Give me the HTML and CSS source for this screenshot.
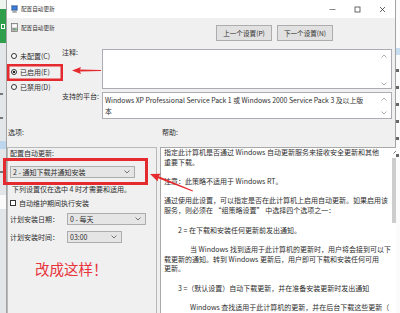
FILE: index.html
```html
<!DOCTYPE html>
<html lang="zh-CN">
<head>
<meta charset="utf-8">
<title>配置自动更新</title>
<link rel="stylesheet" href="styles.css">
</head>
<body>
<div class="screen">
  <div class="bg-left">
    <div class="bl-top"></div>
    <div class="bl-green"><span class="bl-icon"></span></div>
    <div class="bl-rest">
      <span class="bl-mark"></span>
      <span class="bl-mark"></span>
      <span class="bl-blue"></span>
      <span class="bl-mark"></span>
      <span class="bl-white"></span>
    </div>
  </div>

  <div class="dialog">
    <div class="titlebar">
      <svg class="ticon" width="7" height="8" viewBox="0 0 7 8"><rect x="0.5" y="0.5" width="6" height="5" fill="#1d4f9e" stroke="#8a9bb5" stroke-width="0.6"/><rect x="1.3" y="1.3" width="4.4" height="3.4" fill="#3f7fd6"/><rect x="2.5" y="5.5" width="2" height="1" fill="#9a9a9a"/><rect x="1.2" y="6.5" width="4.6" height="1" fill="#777"/></svg>
      <span class="ttext">配置自动更新</span>
      <div class="wctrls">
        <span class="wbtn"><svg width="7" height="7" viewBox="0 0 7 7"><line x1="0.5" y1="3.5" x2="6.5" y2="3.5" stroke="#555" stroke-width="0.7"/></svg></span>
        <span class="wbtn"><svg width="7" height="7" viewBox="0 0 7 7"><rect x="1" y="1" width="5" height="5" fill="none" stroke="#444" stroke-width="0.8"/></svg></span>
        <span class="wbtn"><svg width="7" height="7" viewBox="0 0 7 7"><path d="M1 1 L6 6 M6 1 L1 6" stroke="#444" stroke-width="0.8"/></svg></span>
      </div>
    </div>

    <div class="header">
      <div class="hleft">
        <svg class="hicon" width="7" height="9" viewBox="0 0 7 9"><rect x="0.4" y="0.4" width="6.2" height="8.2" fill="#dcdcdc" stroke="#6d6d6d" stroke-width="0.7"/><rect x="1.4" y="1.5" width="4.2" height="2.6" fill="#fff"/><rect x="1.4" y="5" width="2.4" height="2.6" fill="#8a8a8a"/><rect x="4.2" y="5.2" width="1.4" height="2.2" fill="#4aa35a"/></svg>
        <span class="htext">配置自动更新</span>
      </div>
      <div class="navbtns">
        <span class="btn">上一个设置(P)</span>
        <span class="btn">下一个设置(N)</span>
      </div>
    </div>

    <div class="top">
      <div class="radios">
        <div class="radio"><span class="rcircle"></span><span>未配置(C)</span></div>
        <div class="radio"><span class="rcircle on"></span><span>已启用(E)</span></div>
        <div class="radio"><span class="rcircle"></span><span>已禁用(D)</span></div>
      </div>
      <div class="flabel l1">注释:</div>
      <div class="tbox comment">
        <div class="tcontent"></div>
        <div class="vscroll">
          <svg width="6" height="4" viewBox="0 0 6 4"><polyline points="0.5,3.5 3,1 5.5,3.5" fill="none" stroke="#9a9a9a" stroke-width="0.8"/></svg>
          <svg width="6" height="4" viewBox="0 0 6 4"><polyline points="0.5,0.5 3,3 5.5,0.5" fill="none" stroke="#9a9a9a" stroke-width="0.8"/></svg>
        </div>
      </div>
      <div class="flabel l2">支持的平台:</div>
      <div class="tbox platform">
        <div class="tcontent">Windows XP Professional Service Pack 1 或 Windows 2000 Service Pack 3 及以上版<br>本</div>
        <div class="vscroll">
          <svg width="6" height="4" viewBox="0 0 6 4"><polyline points="0.5,3.5 3,1 5.5,3.5" fill="none" stroke="#9a9a9a" stroke-width="0.8"/></svg>
          <svg width="6" height="4" viewBox="0 0 6 4"><polyline points="0.5,0.5 3,3 5.5,0.5" fill="none" stroke="#9a9a9a" stroke-width="0.8"/></svg>
        </div>
      </div>
    </div>

    <div class="slabels"><span>选项:</span><span class="help-label">帮助:</span></div>

    <div class="panels">
      <div class="options">
        <div class="opt-title">配置自动更新:</div>
        <div class="select wide"><span>2 - 通知下载并通知安装</span><svg width="6" height="4" viewBox="0 0 6 4"><polyline points="0.5,0.5 3,3 5.5,0.5" fill="none" stroke="#555" stroke-width="0.8"/></svg></div>
        <div class="note">下列设置仅在选中 4 时才需要和适用。</div>
        <div class="check"><span class="cbox"></span><span>自动维护期间执行安装</span></div>
        <div class="sched">
          <span class="slabel">计划安装日期：</span>
          <div class="select day"><span>0 - 每天</span><svg width="6" height="4" viewBox="0 0 6 4"><polyline points="0.5,0.5 3,3 5.5,0.5" fill="none" stroke="#555" stroke-width="0.8"/></svg></div>
        </div>
        <div class="sched">
          <span class="slabel">计划安装时间：</span>
          <div class="select time"><span>03:00</span><svg width="6" height="4" viewBox="0 0 6 4"><polyline points="0.5,0.5 3,3 5.5,0.5" fill="none" stroke="#555" stroke-width="0.8"/></svg></div>
        </div>
        <div class="big">改成这样！</div>
      </div>

      <div class="help">
        <div class="help-text">
          <p>指定此计算机是否通过 Windows 自动更新服务来接收安全更新和其他<br>重要下载。</p>
          <p>注意：此策略不适用于 Windows RT。</p>
          <p>通过使用此设置，可以指定是否在此计算机上启用自动更新。如果启用该<br>服务，则必须在 “组策略设置” 中选择四个选项之一：</p>
          <p class="i1">2 = 在下载和安装任何更新前发出通知。</p>
          <p class="i2">当 Windows 找到适用于此计算机的更新时，用户将会接到可以下<br>载更新的通知。转到 Windows 更新后，用户即可下载和安装任何可用<br>更新。</p>
          <p class="i1">3 =（默认设置）自动下载更新，并在准备安装更新时发出通知</p>
          <p class="i2">Windows 查找适用于此计算机的更新，并在后台下载这些更新（</p>
        </div>
        <div class="help-scroll">
          <span class="hs-up"><svg width="6" height="4" viewBox="0 0 6 4"><polyline points="0.5,3.5 3,1 5.5,3.5" fill="none" stroke="#606060" stroke-width="0.8"/></svg></span>
          <span class="hs-thumb"></span>
        </div>
      </div>
    </div>
  </div>

  <div class="bg-right">
    <span class="br-blue"></span>
    <span class="br-mark"></span>
    <span class="br-mark"></span>
    <span class="br-mark"></span>
    <span class="br-mark"></span>
    <span class="br-mark"></span>
    <span class="br-mark"></span>
  </div>

  <svg class="annot" width="400" height="313" viewBox="0 0 400 313">
    <rect x="8.25" y="65.25" width="53.5" height="14.5" fill="none" stroke="#e52a2f" stroke-width="2.5"/>
    <rect x="4.5" y="159.5" width="142" height="24" fill="none" stroke="#e52a2f" stroke-width="3"/>
    <polygon transform="translate(72 70.5)" points="0,0 9,-3.6 8,-0.9 29,-0.4 29,0.4 8,0.9 9,3.6" fill="#e52a2f"/>
    <polygon transform="translate(150 174) rotate(21.6)" points="0,0 10,-4.2 9,-1.1 46,-0.5 46,0.5 9,1.1 10,4.2" fill="#e52a2f"/>
  </svg>
</div>
</body>
</html>
```

FILE: styles.css
```css
* { box-sizing: border-box; margin: 0; padding: 0; }

html, body { width: 400px; height: 313px; overflow: hidden; }

body {
  background: #e6e6e6;
  font-family: "Noto Sans CJK SC", "Noto Sans", sans-serif;
  font-size: 7px;
  line-height: 8px;
  color: #2e2e2e;
}

.screen {
  position: relative;
  display: flex;
  width: 400px;
  height: 313px;
  overflow: hidden;
}

/* background application strips */
.bg-left {
  flex: none;
  width: 6px;
  display: flex;
  flex-direction: column;
  background: #e3e6e9;
}
.bl-top { height: 9px; background: #eef5ee; }
.bl-green {
  height: 34px;
  background: #2f9e4a;
  display: flex;
  align-items: center;
  justify-content: center;
}
.bl-icon { width: 4px; height: 5px; border: 1px solid #fff; }
.bl-rest {
  display: flex;
  flex-direction: column;
  gap: 22px;
  padding-top: 50px;
}
.bl-mark { width: 3px; height: 2px; background: #777; }
.bl-blue { width: 6px; height: 8px; background: #bcd6ee; }
.bl-white { width: 6px; height: 14px; background: #fafafa; }

.bg-right {
  flex: none;
  width: 4px;
  display: flex;
  flex-direction: column;
  gap: 14px;
  background: #fbfbfb;
  padding-top: 48px;
}
.br-blue { width: 4px; height: 7px; background: #c6dcf0; }
.br-mark { width: 3px; height: 3px; background: #666; }

/* dialog */
.dialog {
  flex: none;
  width: 390px;
  display: flex;
  flex-direction: column;
  background: #f0f0f0;
  border-left: 1px solid #a3a3a3;
  border-right: 1px solid #a3a3a3;
}

.titlebar {
  flex: none;
  height: 18px;
  display: flex;
  align-items: center;
  padding-left: 4px;
  background: #fff;
}
.ticon { margin-right: 3px; }
.ttext { font-size: 5.6px; color: #333; }
.wctrls { margin-left: auto; display: flex; }
.wbtn {
  width: 25px;
  height: 18px;
  display: flex;
  align-items: center;
  justify-content: center;
}

.header {
  flex: none;
  height: 23px;
  display: flex;
}
.hleft {
  display: flex;
  align-items: center;
  height: 14px;
  padding: 5px 0 0 4px;
}
.hicon { margin-right: 3px; }
.htext { font-size: 5.6px; color: #333; }
.navbtns {
  display: flex;
  gap: 5px;
  margin: 7px 62px 0 auto;
}
.btn {
  width: 56px;
  height: 16px;
  display: flex;
  align-items: center;
  justify-content: center;
  background: #e1e1e1;
  border: 1px solid #adadad;
  font-size: 6.6px;
}

.top {
  flex: none;
  display: grid;
  grid-template-columns: 55px 40px 290px;
  grid-template-rows: 40px 27px;
  row-gap: 3px;
  padding-top: 8px;
}
.radios {
  grid-row: 1 / 3;
  grid-column: 1;
  display: flex;
  flex-direction: column;
  gap: 7.5px;
  padding: 3px 0 0 4px;
}
.radio {
  display: flex;
  align-items: center;
  gap: 3px;
  height: 8px;
}
.rcircle {
  width: 6px;
  height: 6px;
  border-radius: 50%;
  border: 1px solid #333;
  background: #fff;
}
.rcircle.on { background: radial-gradient(circle, #222 0 1.2px, #fff 1.6px); }

.flabel { line-height: 8px; }
.l1 { margin-top: -1px; }

.tbox {
  display: flex;
  background: #fff;
  border: 1px solid #abadb3;
}
.tcontent {
  flex: 1;
  padding: 2px 2px;
  white-space: nowrap;
  overflow: hidden;
}
.platform .tcontent { line-height: 10.5px; font-size: 6.85px; }
.vscroll {
  flex: none;
  width: 14px;
  display: flex;
  flex-direction: column;
  align-items: center;
  justify-content: space-between;
  padding: 4px 0 2px;
}
.platform .vscroll { padding: 4px 0 3px; }

.slabels {
  flex: none;
  display: grid;
  grid-template-columns: 153px 1fr;
  margin-top: 9px;
  padding-left: 1px;
  line-height: 8px;
}
.help-label { padding-left: 1px; }

.panels {
  flex: 1;
  min-height: 0;
  display: flex;
  gap: 3px;
  margin-top: 11px;
  padding-right: 2px;
}

.options {
  flex: none;
  width: 150px;
  border: 1px solid #b9b9b9;
  border-bottom: none;
  padding: 1px 0 0 2px;
}
.opt-title { line-height: 8px; }
.select {
  height: 12px;
  display: flex;
  align-items: center;
  justify-content: space-between;
  padding: 0 4px 0 2px;
  background: #e5e5e5;
  border: 1px solid #adadad;
}
.select.wide { width: 125px; margin-top: 9px; }
.select.day { width: 79px; }
.select.time { width: 55px; }
.note { margin-top: 7px; padding-left: 2px; }
.check {
  display: flex;
  align-items: center;
  gap: 3px;
  height: 8px;
  margin-top: 6px;
}
.cbox {
  width: 6px;
  height: 6px;
  border: 1px solid #333;
  background: #fff;
}
.sched {
  display: flex;
  align-items: center;
  height: 12px;
  margin-top: 6px;
}
.slabel { width: 57px; }
.big {
  margin-top: 18px;
  padding-left: 25px;
  font-size: 14.5px;
  line-height: 16px;
  color: #e8343b;
}

.help {
  flex: 1;
  display: flex;
  background: #fff;
  border: 1px solid #a9a9a9;
  border-bottom: none;
}
.help-text {
  flex: 1;
  overflow: hidden;
  white-space: nowrap;
  padding-left: 3px;
  line-height: 9.7px;
}
.help-text p { margin-bottom: 9.7px; }
.help-text .i1 { padding-left: 14px; }
.help-text .i2 { text-indent: 26px; }

.help-scroll {
  flex: none;
  width: 10px;
  display: flex;
  flex-direction: column;
  align-items: center;
}
.hs-up {
  height: 8px;
  display: flex;
  align-items: center;
}
.hs-thumb {
  width: 8px;
  height: 65px;
  margin-top: 2px;
  background: #cdcdcd;
}

.annot {
  position: absolute;
  left: 0;
  top: 0;
  pointer-events: none;
}
```
